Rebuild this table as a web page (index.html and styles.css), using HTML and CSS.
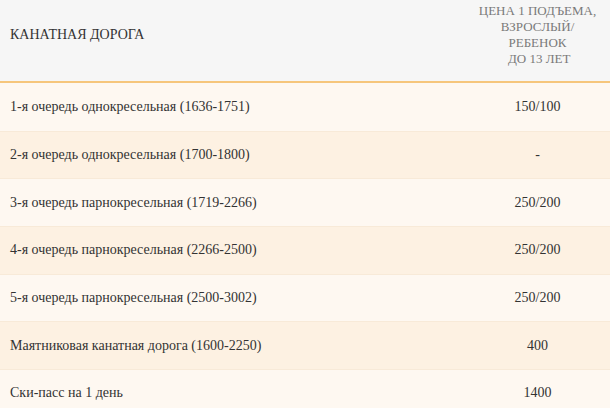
FILE: index.html
```html
<!DOCTYPE html>
<html lang="ru">
<head>
<meta charset="utf-8">
<title>Канатная дорога</title>
<link rel="stylesheet" href="styles.css">
</head>
<body>
<table class="prices">
  <thead>
    <tr>
      <th class="col-name">КАНАТНАЯ ДОРОГА</th>
      <th class="col-price">ЦЕНА 1 ПОДЪЕМА,<br>ВЗРОСЛЫЙ/<br>РЕБЕНОК<br>&nbsp;ДО 13 ЛЕТ</th>
    </tr>
  </thead>
  <tbody>
    <tr class="light"><td class="col-name">1-я очередь однокресельная (1636-1751)</td><td class="col-price">150/100</td></tr>
    <tr class="dark"><td class="col-name">2-я очередь однокресельная (1700-1800)</td><td class="col-price">-</td></tr>
    <tr class="light"><td class="col-name">3-я очередь парнокресельная (1719-2266)</td><td class="col-price">250/200</td></tr>
    <tr class="dark"><td class="col-name">4-я очередь парнокресельная (2266-2500)</td><td class="col-price">250/200</td></tr>
    <tr class="light"><td class="col-name">5-я очередь парнокресельная (2500-3002)</td><td class="col-price">250/200</td></tr>
    <tr class="dark"><td class="col-name">Маятниковая канатная дорога (1600-2250)</td><td class="col-price">400</td></tr>
    <tr class="light"><td class="col-name">Ски-пасс на 1 день</td><td class="col-price">1400</td></tr>
  </tbody>
</table>
</body>
</html>
```

FILE: styles.css
```css
html, body {
  margin: 0;
  padding: 0;
  background: #fef8f1;
}

.prices {
  width: 610px;
  border-collapse: collapse;
  font-family: "Liberation Serif", "Times New Roman", serif;
  font-size: 14px;
  line-height: 16px;
  color: #333333;
}

.prices th {
  background: #f6f6f6;
  font-weight: normal;
  height: 64px;
  padding: 3px 10px 14px 10px;
  vertical-align: middle;
  border-bottom: 2px solid #f6c67c;
}

.prices th.col-name {
  text-align: left;
  color: #333333;
  font-size: 14px;
}

.prices th.col-price {
  text-align: center;
  color: #7a7a7a;
  font-size: 13px;
}

.prices td {
  height: 46.67px;
  padding: 0 10px;
  vertical-align: middle;
  border-top: 1px solid #f8ead8;
}

.prices tbody tr:first-child td {
  border-top: none;
  height: 47.67px;
}

.col-name {
  text-align: left;
}

.col-price {
  width: 125px;
  text-align: center;
}

.light td {
  background: #fef8f1;
}

.dark td {
  background: #fdf1e2;
}
```
